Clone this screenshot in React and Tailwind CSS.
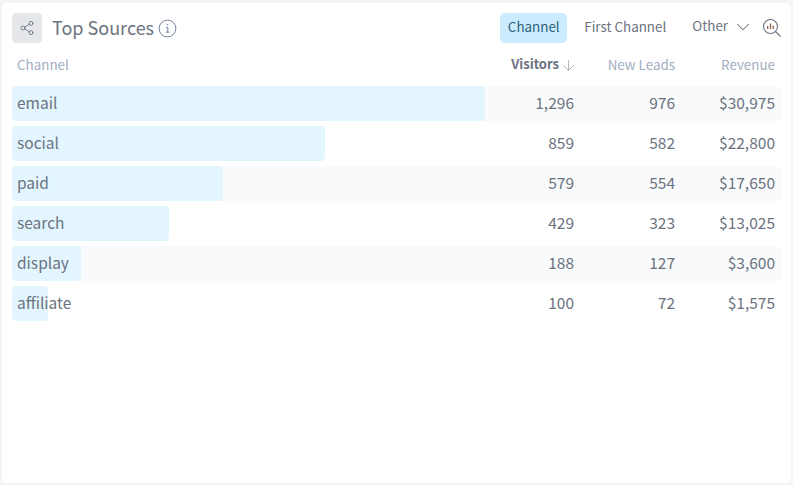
import React from "react";
import { ChevronDown, ArrowDown, Share2 } from "lucide-react";

const rows = [
  { name: "email", barWidth: 473, visitors: "1,296", leads: "976", revenue: "$30,975" },
  { name: "social", barWidth: 313, visitors: "859", leads: "582", revenue: "$22,800" },
  { name: "paid", barWidth: 211, visitors: "579", leads: "554", revenue: "$17,650" },
  { name: "search", barWidth: 157, visitors: "429", leads: "323", revenue: "$13,025" },
  { name: "display", barWidth: 69, visitors: "188", leads: "127", revenue: "$3,600" },
  { name: "affiliate", barWidth: 36, visitors: "100", leads: "72", revenue: "$1,575" },
];

const App = () => {
  return (
    <div className="h-[485px] w-[793px] overflow-hidden bg-[#f3f4f6] pl-[2px] pr-[2px] pt-[3px] pb-[2px] font-['Noto_Sans_CJK_SC',sans-serif]">
      <div className="h-[480px] rounded-[5px] bg-white pl-[10px] pr-[10px]">
        {/* Header */}
        <div className="flex h-[40px] items-end">
          <div className="flex h-[30px] w-[30px] items-center justify-center rounded-[4px] bg-[#e5e7eb]">
            <Share2 size={16} strokeWidth={1.25} className="text-[#6b7280]" />
          </div>
          <div className="ml-[10px] flex h-[30px] items-center">
            <span className="relative top-[-1px] text-[18px] leading-[30px] text-[#6b7280]">Top Sources</span>
            <svg width="19" height="19" viewBox="0 0 19 19" fill="none" className="ml-[4px] text-[#718096]">
              <circle cx="9.5" cy="9.5" r="8.4" stroke="currentColor" strokeWidth="1" />
              <path d="M8 8.5h1.8v4.6M7.8 13.2h3.6" stroke="currentColor" strokeWidth="1" />
              <circle cx="9.5" cy="5.8" r="0.8" fill="currentColor" />
            </svg>
          </div>
          <div className="ml-auto flex h-[30px] items-center">
            <div className="flex h-[30px] w-[67px] items-center justify-center rounded-[5px] bg-[#cbebfe] pb-[3px] text-[13.4px] text-[#2c5f7c]">
              Channel
            </div>
            <div className="ml-[17px] pb-[3px] text-[13.4px] text-[#6b7280]">First Channel</div>
            <div className="ml-[26px] flex items-center text-[13.4px] text-[#6b7280]">
              <span className="relative top-[-3px]">Other</span>
              <ChevronDown size={22} strokeWidth={1.1} className="relative top-[-1px] ml-[4px] mr-[-1px]" />
            </div>
            <svg width="20" height="20" viewBox="0 0 20 20" fill="none" className="ml-[9px] mr-[-1px] text-[#6b7280]">
              <circle cx="8.5" cy="8.5" r="7" stroke="currentColor" strokeWidth="1.1" />
              <path d="M13.5 13.5L18.5 18.5" stroke="currentColor" strokeWidth="1.1" />
              <path d="M5.7 8v3M8.5 5.5v5.5M11.2 7.5v3.5" stroke="#8a5a44" strokeWidth="1.2" />
            </svg>
          </div>
        </div>

        {/* Column heads */}
        <div className="flex h-[43px] items-center pb-[1px] pr-[6px] text-[13.4px] text-[#a0aec0]">
          <div className="flex-1 pl-[5px]">Channel</div>
          <div className="flex w-[80px] items-center justify-end text-[13px] font-semibold text-[#6b7280]">
            Visitors
            <ArrowDown size={17} strokeWidth={1.1} className="ml-[1px] mr-[-3px] mt-[2px] text-[#9ca3af]" />
          </div>
          <div className="w-[101px] text-right">New Leads</div>
          <div className="w-[100px] text-right">Revenue</div>
        </div>

        {/* Rows */}
        <div className="flex flex-col gap-[5px]">
          {rows.map((row, i) => (
            <div
              key={row.name}
              className={`relative flex h-[35px] items-center rounded-[4px] pb-[1px] pr-[6px] text-[15.5px] text-[#6b7280] ${i % 2 === 0 ? "bg-[#f9fafb]" : "bg-white"}`}
            >
              <div
                className="absolute left-0 top-0 h-[35px] rounded-[4px] bg-[#e3f5fe]"
                style={{ width: row.barWidth }}
              />
              <div className="relative flex-1 pl-[5px]">{row.name}</div>
              <div className="relative w-[80px] text-right">{row.visitors}</div>
              <div className="relative w-[101px] text-right">{row.leads}</div>
              <div className="relative w-[100px] text-right">{row.revenue}</div>
            </div>
          ))}
        </div>
      </div>
    </div>
  );
};

export default App;
